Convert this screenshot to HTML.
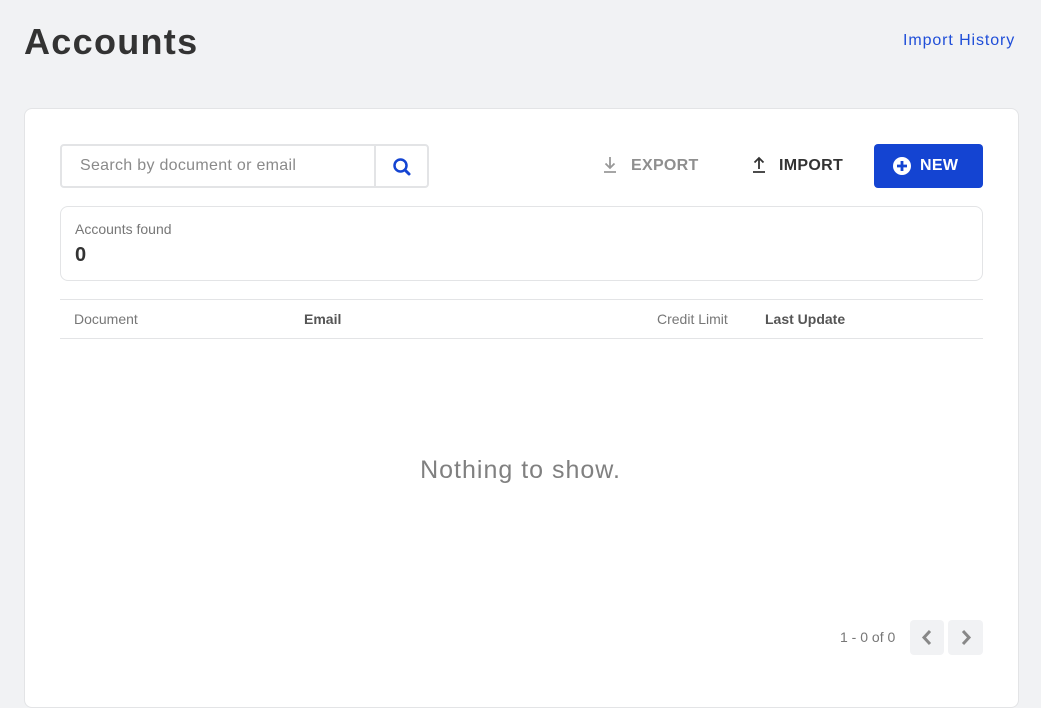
<!DOCTYPE html>
<html><head><style>
*{box-sizing:border-box;margin:0;padding:0}
body{width:1041px;height:688px;background:#f1f2f4;font-family:"Liberation Sans",sans-serif;position:relative;overflow:hidden;color:#3d3d3d}
.abs{position:absolute}
h1{position:absolute;left:24px;top:21px;font-size:36px;font-weight:bold;color:#333;letter-spacing:1.3px}
.ih{left:903px;top:32px;font-size:16px;color:#1f4ed8;letter-spacing:0.9px}
.card{left:24px;top:108px;width:995px;height:600px;background:#fff;border:1px solid #e3e4e6;border-radius:8px}
.search{left:60px;top:144px;width:369px;height:44px;border:2px solid #e3e4e6;border-radius:4px}
.search .t{position:absolute;left:18px;top:11px;font-size:16px;color:#8a8a8a;letter-spacing:0.3px}
.search .b{position:absolute;left:312px;top:0;width:2px;height:40px;background:#e3e4e6}
.btn{font-size:16px;font-weight:bold;letter-spacing:.3px}
.new{left:874px;top:144px;width:109px;height:44px;background:#1444d2;border-radius:4px;color:#fff}
.found{left:60px;top:206px;width:923px;height:75px;border:1px solid #e3e4e6;border-radius:8px}
.line{left:60px;width:923px;height:1px;background:#e3e4e6}
.th{top:311px;font-size:14px;color:#777}
</style></head><body>
<h1>Accounts</h1>
<div class="abs ih">Import History</div>
<div class="abs card"></div>
<div class="abs search"><div class="t">Search by document or email</div><div class="b"></div>
<svg class="abs" style="left:330px;top:11px" width="20" height="20" viewBox="0 0 20 20"><circle cx="8.5" cy="8.5" r="6" fill="none" stroke="#1444d2" stroke-width="2.5"/><path d="M13 13l4 4" stroke="#1444d2" stroke-width="3" stroke-linecap="round"/></svg></div>
<svg class="abs" style="left:602px;top:156px" width="16" height="18" viewBox="0 0 16 18"><path d="M8 1v11M3.5 7.5L8 12l4.5-4.5M2 16h12" fill="none" stroke="#999" stroke-width="1.8"/></svg>
<div class="abs btn" style="left:631px;top:157px;color:#8f8f8f">EXPORT</div>
<svg class="abs" style="left:751px;top:156px" width="16" height="18" viewBox="0 0 16 18"><path d="M8 13V2M3.5 6.5L8 2l4.5 4.5M2 16h12" fill="none" stroke="#333" stroke-width="1.8"/></svg>
<div class="abs btn" style="left:779px;top:157px;color:#333">IMPORT</div>
<div class="abs new"><svg class="abs" style="left:18px;top:12px" width="20" height="20" viewBox="0 0 20 20"><circle cx="10" cy="10" r="9" fill="#fff"/><path d="M10 5v10M5 10h10" stroke="#1444d2" stroke-width="2.8"/></svg><div class="abs btn" style="left:46px;top:13px">NEW</div></div>
<div class="abs found"><div class="abs" style="left:14px;top:14px;font-size:14px;color:#777">Accounts found</div><div class="abs" style="left:14px;top:37px;font-size:20px;font-weight:bold;color:#333">0</div></div>
<div class="abs line" style="top:299px"></div>
<div class="abs th" style="left:74px">Document</div>
<div class="abs th" style="left:304px;font-weight:bold;color:#555">Email</div>
<div class="abs th" style="left:657px">Credit Limit</div>
<div class="abs th" style="left:765px;font-weight:bold;color:#555">Last Update</div>
<div class="abs line" style="top:338px"></div>
<div class="abs" style="left:0;width:1041px;top:456px;text-align:center;font-size:25px;color:#808080;letter-spacing:1px">Nothing to show.</div>
<div class="abs" style="left:840px;top:629px;font-size:14px;color:#777">1 - 0 of 0</div>
<div class="abs" style="left:910px;top:620px;width:34px;height:35px;background:#f1f2f4;border-radius:4px"><svg class="abs" style="left:10px;top:9px" width="14" height="17" viewBox="0 0 14 17"><path d="M10 2L4 8.5 10 15" fill="none" stroke="#888" stroke-width="3"/></svg></div>
<div class="abs" style="left:948px;top:620px;width:35px;height:35px;background:#f1f2f4;border-radius:4px"><svg class="abs" style="left:11px;top:9px" width="14" height="17" viewBox="0 0 14 17"><path d="M4 2l6 6.5L4 15" fill="none" stroke="#888" stroke-width="3"/></svg></div>
</body></html>
